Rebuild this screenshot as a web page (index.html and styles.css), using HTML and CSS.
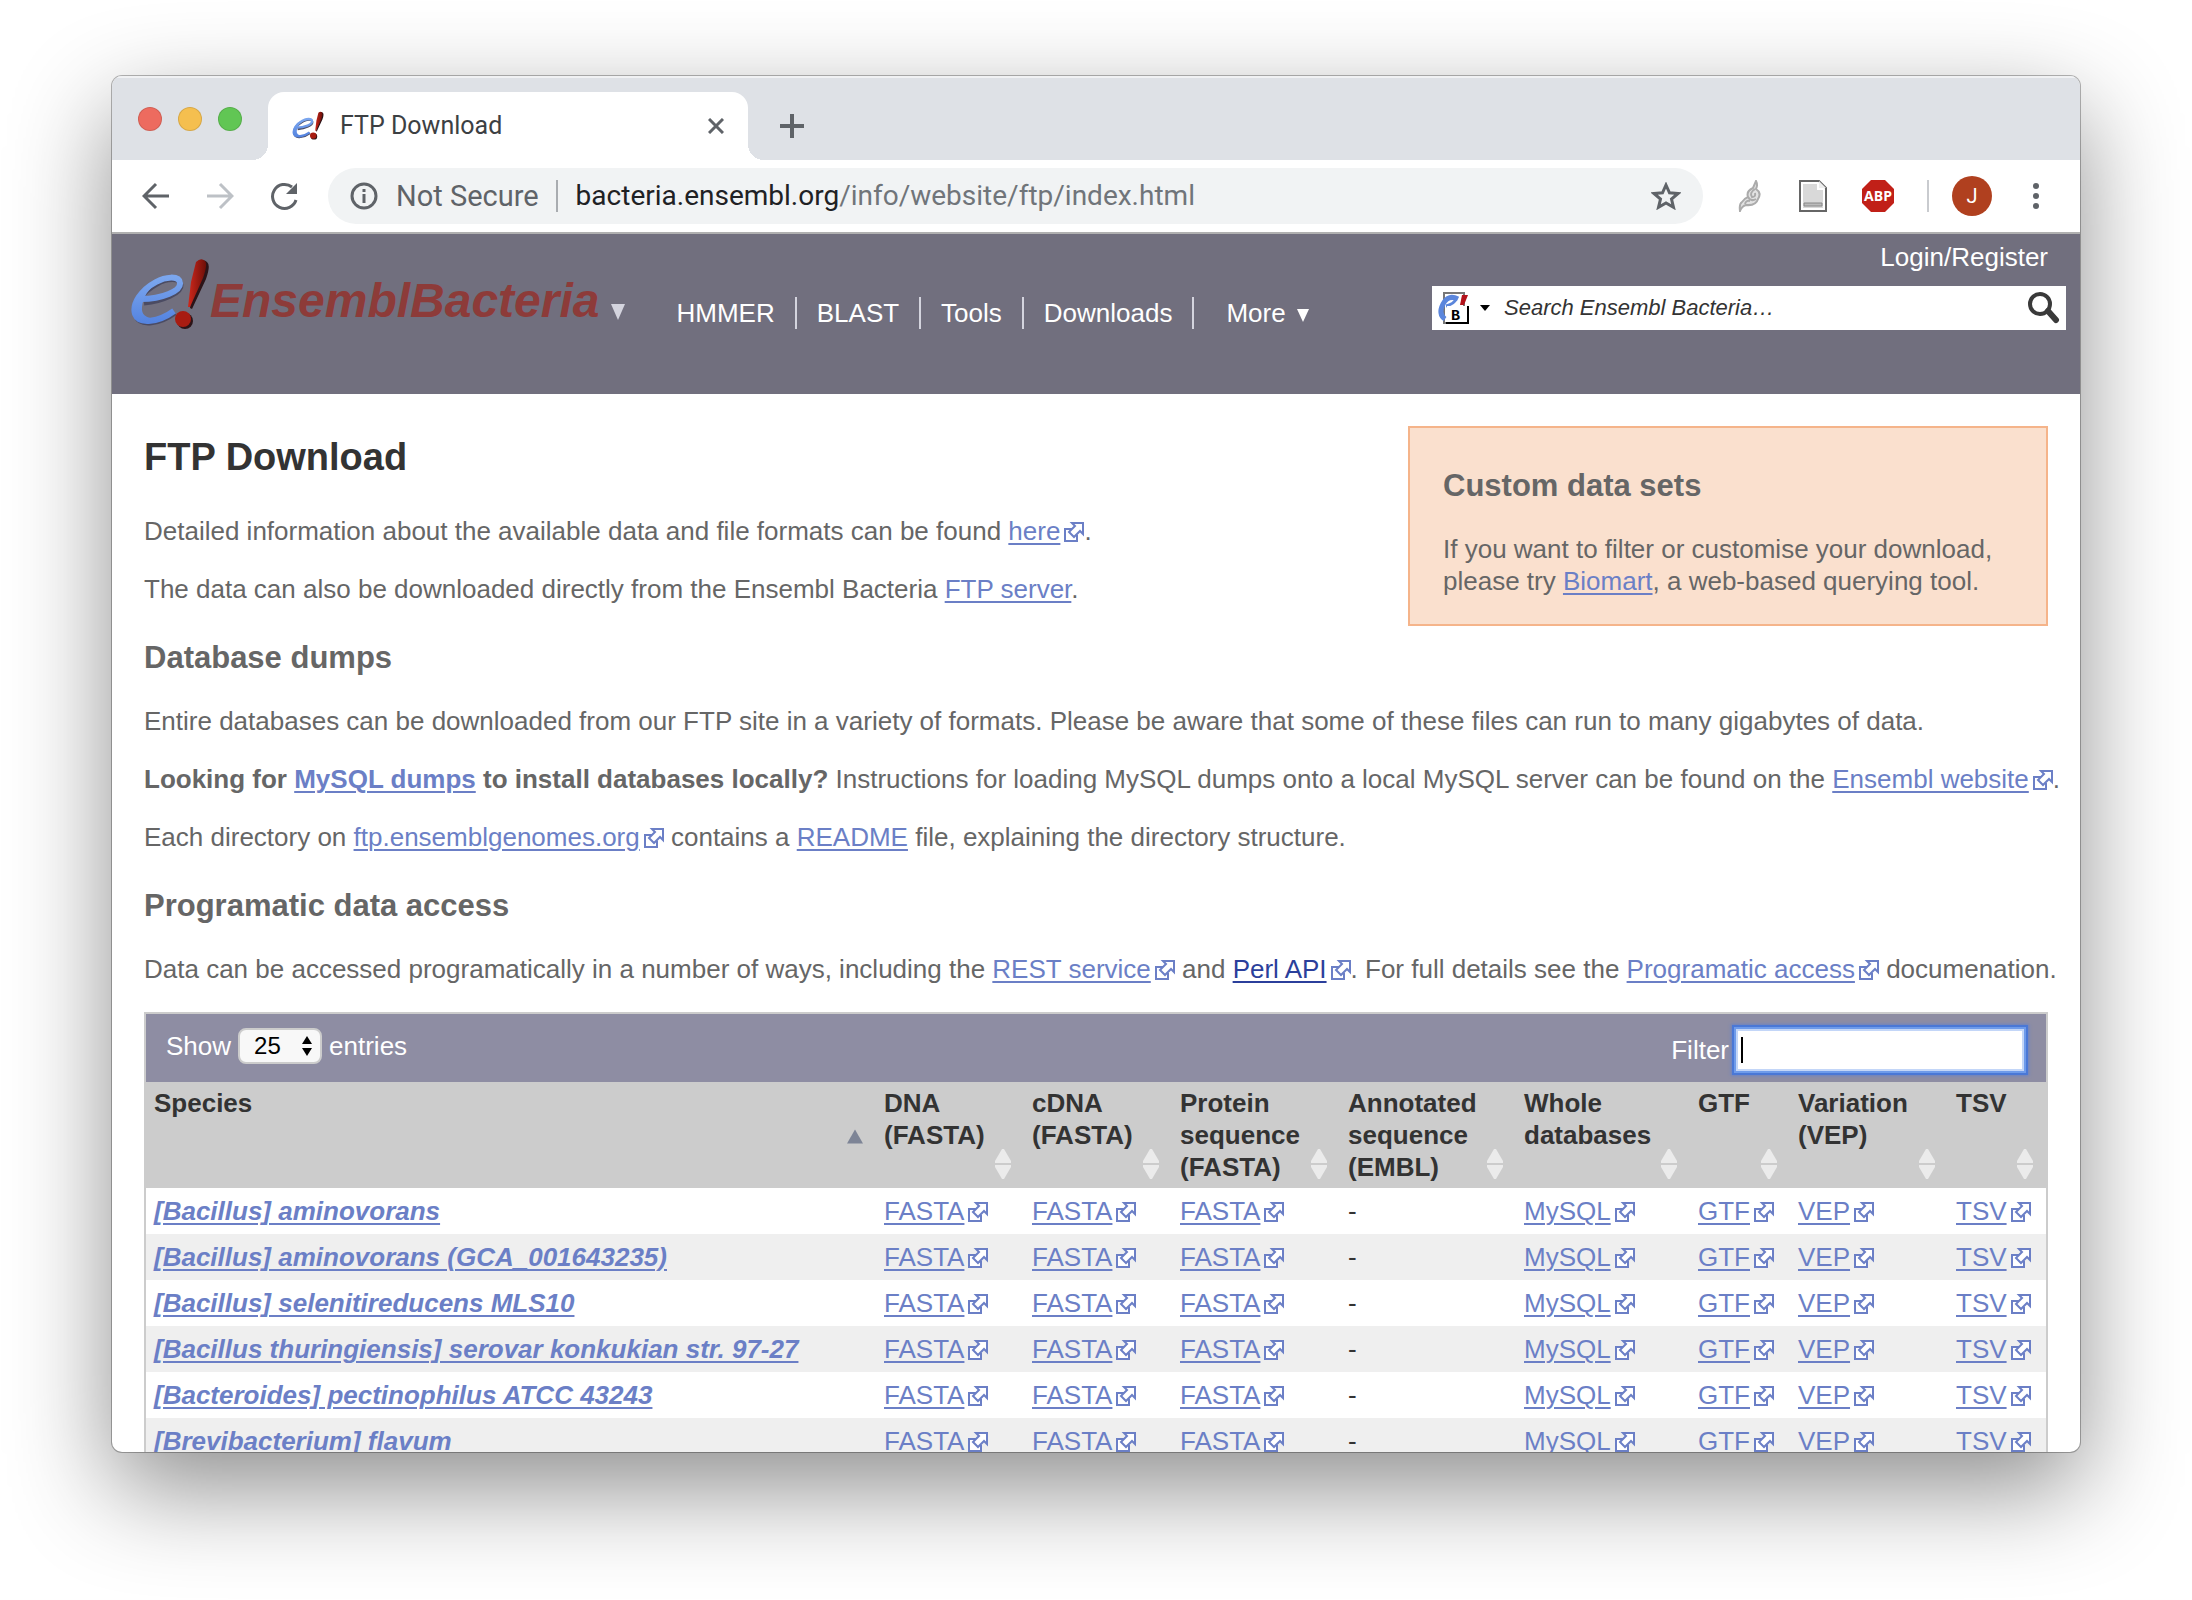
FILE: index.html
```html
<!DOCTYPE html>
<html lang="en">
<head>
<meta charset="utf-8">
<title>FTP Download</title>
<link rel="stylesheet" href="styles.css">
</head>
<body>
<svg class="defs" aria-hidden="true">
  <defs>
    <linearGradient id="blue" x1="0" y1="0" x2="0" y2="1"><stop offset="0" stop-color="#7ba6ee"/><stop offset="1" stop-color="#5584e0"/></linearGradient>
    <linearGradient id="red" x1="0" y1="0" x2="1" y2="0"><stop offset="0" stop-color="#d0281c"/><stop offset="1" stop-color="#6d0f08"/></linearGradient>
    <symbol id="mark" viewBox="0 0 80 74">
      <path d="M13 43C32 41 51 33 50 25C49 17 35 19 26 24C11 32 2 46 5 56C9 67 29 64 44 53" fill="none" stroke="#4b4b62" stroke-width="5" transform="translate(1 2)"/>
      <path d="M11 41C32 41 51 33 50 25C49 17 35 19 26 24C11 32 2 46 5 56C9 67 29 64 44 53" fill="none" stroke="url(#blue)" stroke-width="6"/>
      <path d="M26 22C9 30 0 46 3 57C6 67 22 66 32 60C18 62 11 58 12 49C13 40 18 30 28 25Z" fill="url(#blue)"/>
      <path d="M66 4Q71-1 75 3Q79 6 74 20L60 50L58 49L61 24Z" fill="#2c1418" transform="translate(2 1)"/>
      <path d="M66 4Q71-1 75 3Q78 6 73 20L60 49L58 49L61 24Z" fill="url(#red)"/>
      <circle cx="55" cy="63" r="8" fill="#2c1418"/>
      <circle cx="53" cy="61" r="8" fill="#a81c12"/>
    </symbol>
    <symbol id="ext" viewBox="0 0 20 20">
      <path d="M8 7H1V19H13V13" fill="#fff" stroke="#6b7fc6" stroke-width="2"/>
      <path d="M8 1H19V12L16 9L10 15L5 10L11 4Z" fill="#fff" stroke="#6b7fc6" stroke-width="2"/>
    </symbol>
    <symbol id="sort" viewBox="0 0 16 30">
      <path d="M7 0H9L16 12V14H0V12ZM0 16H16V18L9 30H7L0 18Z" fill="#ebebeb"/>
    </symbol>
  </defs>
</svg>

<div class="window">
  <div class="tabstrip">
    <div class="lights"><span class="light red"></span><span class="light yellow"></span><span class="light green"></span></div>
    <div class="tab">
      <svg class="favicon" aria-hidden="true"><use href="#mark"/></svg>
      <span class="tab-title">FTP Download</span>
      <button class="icon-btn" aria-label="Close tab"><svg width="16" height="16" viewBox="0 0 16 16"><path d="M1 1L15 15M15 1L1 15" stroke="#5f6368" stroke-width="3"/></svg></button>
    </div>
    <button class="icon-btn newtab" aria-label="New tab"><svg width="24" height="24" viewBox="0 0 24 24"><path d="M12 0V24M0 12H24" stroke="#5f6368" stroke-width="4"/></svg></button>
  </div>

  <div class="toolbar">
    <button class="icon-btn" aria-label="Back"><svg width="28" height="28" viewBox="0 0 28 28"><path d="M27 14H3M14 2L2 14L14 26" fill="none" stroke="#5f6368" stroke-width="3"/></svg></button>
    <button class="icon-btn" aria-label="Forward"><svg width="28" height="28" viewBox="0 0 28 28"><path d="M1 14H25M14 2L26 14L14 26" fill="none" stroke="#bdc1c6" stroke-width="3"/></svg></button>
    <button class="icon-btn" aria-label="Reload"><svg width="28" height="28" viewBox="0 0 28 28"><path d="M26 18A12 12 0 1 1 22 5" fill="none" stroke="#5f6368" stroke-width="3"/><path d="M27 1V12H16Z" fill="#5f6368"/></svg></button>
    <div class="omnibox">
      <svg width="28" height="28" viewBox="0 0 28 28" aria-hidden="true"><circle cx="14" cy="14" r="12" fill="none" stroke="#5f6368" stroke-width="3"/><path d="M14 12V21M14 7V10" stroke="#5f6368" stroke-width="3"/></svg>
      <span class="secure">Not Secure</span>
      <span class="url">bacteria.ensembl.org<span class="path">/info/website/ftp/index.html</span></span>
      <button class="icon-btn star" aria-label="Bookmark"><svg width="30" height="28" viewBox="0 0 30 28"><path d="M15 3L18.500 10.800L27 11.500L20.500 17L22.500 25.300L15 21L7.500 25.300L9.500 17L3 11.500L11.500 10.800Z" fill="none" stroke="#5f6368" stroke-width="3"/></svg></button>
    </div>
    <div class="extensions">
      <button class="icon-btn" aria-label="Feather"><svg width="28" height="32" viewBox="0 0 28 32"><path d="M4 31Q3 24 6 22Q9 18 12 17Q10 11 17 8L20 1Q22 5 20 9Q26 13 22 19Q20 26 10 25Q6 26 4 31Z" fill="#e2e2e2" stroke="#ababab" stroke-width="2"/><path d="M19 9Q13 13 16 17Q20 17 19 13M12 17Q15 22 20 19M9 24Q10 20 14 21" fill="none" stroke="#ababab" stroke-width="2"/></svg></button>
      <button class="icon-btn" aria-label="Document"><svg width="28" height="32" viewBox="0 0 28 32"><path d="M1 1H20L27 8V31H1Z" fill="#fff" stroke="#666" stroke-width="2"/><path d="M4 4H18V10H24V28H4Z" fill="#d9d9d9"/><path d="M20 1V8H27Z" fill="#eee"/><path d="M5 23H23V26H5Z" fill="#bbb" stroke="#888"/></svg></button>
      <button class="icon-btn abp" aria-label="Adblock Plus"><svg width="32" height="32" viewBox="0 0 32 32"><path d="M9 0H23L32 9V23L23 32H9L0 23V9Z" fill="#c12018"/></svg><span>ABP</span></button>
      <span class="divider"></span>
      <button class="avatar">J</button>
      <button class="icon-btn menu" aria-label="Menu"><svg width="8" height="28" viewBox="0 0 8 28"><g fill="#5f6368"><circle cx="4" cy="4" r="3"/><circle cx="4" cy="14" r="3"/><circle cx="4" cy="24" r="3"/></g></svg></button>
    </div>
  </div>

  <div class="page">
    <header class="masthead">
      <a class="logo" href="#"><svg class="logo-mark" aria-hidden="true"><use href="#mark"/></svg><span>EnsemblBacteria</span><svg class="logo-arrow" viewBox="0 0 14 16"><path d="M0 0H14L7 16Z" fill="#d4d4de"/></svg></a>
      <nav class="nav">
        <a href="#">HMMER</a><a href="#">BLAST</a><a href="#">Tools</a><a href="#">Downloads</a>
        <a class="more" href="#">More <svg width="12" height="13" viewBox="0 0 12 13"><path d="M0 0H12L6 13Z" fill="#fff"/></svg></a>
      </nav>
      <div class="tools">
        <a class="login" href="#">Login/Register</a>
        <form class="search">
          <button type="button" class="icon-btn species-pick" aria-label="Choose site">
            <svg class="site" viewBox="0 0 32 32"><path d="M6 1H26V31H6Z" fill="#fff" stroke="#777" stroke-width="2"/><path d="M20 7Q10 2 5 12Q0 22 7 27" fill="none" stroke="#5b86dc" stroke-width="5"/><path d="M8 14Q16 12 18 7" fill="none" stroke="#5b86dc" stroke-width="3"/><path d="M24 3H30L26 13H22Z" fill="#b3131b"/><path d="M9 14H29V30H9Z" fill="#fff"/><path d="M30 14V31H8" fill="none" stroke="#000" stroke-width="2"/><text x="13" y="28" class="badge">B</text></svg>
            <svg width="10" height="6" viewBox="0 0 10 6"><path d="M0 0H10L5 6Z" fill="#000"/></svg>
          </button>
          <input type="text" aria-label="Search" placeholder="Search Ensembl Bacteria…">
          <button type="button" class="icon-btn" aria-label="Go"><svg width="32" height="32" viewBox="0 0 32 32"><circle cx="12" cy="12" r="10" fill="none" stroke="#3a3a3a" stroke-width="4"/><path d="M20 19L28 28" stroke="#3a3a3a" stroke-width="6" stroke-linecap="round"/></svg></button>
        </form>
      </div>
    </header>

    <main class="content">
      <div class="top">
        <div class="intro">
          <h1>FTP Download</h1>
          <p>Detailed information about the available data and file formats can be found <a href="#">here</a><svg class="ext"><use href="#ext"/></svg>.</p>
          <p>The data can also be downloaded directly from the Ensembl Bacteria <a href="#">FTP server</a>.</p>
          <h2>Database dumps</h2>
        </div>
        <aside class="info">
          <h2>Custom data sets</h2>
          <p>If you want to filter or customise your download, please try <a href="#">Biomart</a>, a web-based querying tool.</p>
        </aside>
      </div>
      <p class="line">Entire databases can be downloaded from our FTP site in a variety of formats. Please be aware that some of these files can run to many gigabytes of data.</p>
      <p class="line"><b>Looking for <a href="#">MySQL dumps</a> to install databases locally?</b> Instructions for loading MySQL dumps onto a local MySQL server can be found on the <a href="#">Ensembl website</a><svg class="ext"><use href="#ext"/></svg>.</p>
      <p class="line">Each directory on <a href="#">ftp.ensemblgenomes.org</a><svg class="ext"><use href="#ext"/></svg> contains a <a href="#">README</a> file, explaining the directory structure.</p>
      <h2>Programatic data access</h2>
      <p class="line">Data can be accessed programatically in a number of ways, including the <a href="#">REST service</a><svg class="ext"><use href="#ext"/></svg> and <a class="visited" href="#">Perl API</a><svg class="ext"><use href="#ext"/></svg>. For full details see the <a href="#">Programatic access</a><svg class="ext"><use href="#ext"/></svg> documenation.</p>

      <div class="datatable">
        <div class="controls">
          <label class="length">Show <select><option>25</option></select> entries</label>
          <label class="filter">Filter <span class="field"><input type="text"><span class="caret"></span></span></label>
        </div>
        <table>
          <colgroup><col><col class="c148"><col class="c148"><col class="c168"><col class="c176"><col class="c174"><col class="c100"><col class="c158"><col class="c98"></colgroup>
          <thead>
            <tr>
              <th><button><span>Species</span><svg class="asc" viewBox="0 0 16 14"><path d="M8 0L16 14H0Z" fill="#7d8496"/></svg></button></th>
              <th><button><span>DNA<br>(FASTA)</span><svg class="both"><use href="#sort"/></svg></button></th>
              <th><button><span>cDNA<br>(FASTA)</span><svg class="both"><use href="#sort"/></svg></button></th>
              <th><button><span>Protein<br>sequence<br>(FASTA)</span><svg class="both"><use href="#sort"/></svg></button></th>
              <th><button><span>Annotated<br>sequence<br>(EMBL)</span><svg class="both"><use href="#sort"/></svg></button></th>
              <th><button><span>Whole<br>databases</span><svg class="both"><use href="#sort"/></svg></button></th>
              <th><button><span>GTF</span><svg class="both"><use href="#sort"/></svg></button></th>
              <th><button><span>Variation<br>(VEP)</span><svg class="both"><use href="#sort"/></svg></button></th>
              <th><button><span>TSV</span><svg class="both"><use href="#sort"/></svg></button></th>
            </tr>
          </thead>
          <tbody id="rows"></tbody>
        </table>
      </div>
    </main>
  </div>
</div>
<script src="rows.js"></script>
</body>
</html>
```
FILE: rows.js
```js
const species = [
  "[Bacillus] aminovorans",
  "[Bacillus] aminovorans (GCA_001643235)",
  "[Bacillus] selenitireducens MLS10",
  "[Bacillus thuringiensis] serovar konkukian str. 97-27",
  "[Bacteroides] pectinophilus ATCC 43243",
  "[Brevibacterium] flavum"
];
const files = ["FASTA", "FASTA", "FASTA", null, "MySQL", "GTF", "VEP", "TSV"];
const cell = f => f
  ? `<td><a href="#">${f}</a><svg class="ext"><use href="#ext"/></svg></td>`
  : "<td>-</td>";
document.getElementById("rows").innerHTML = species
  .map(s => `<tr><td class="species"><a href="#">${s}</a></td>${files.map(cell).join("")}</tr>`)
  .join("");
```
FILE: styles.css
```css
* { box-sizing: border-box; }

body {
  margin: 0;
  height: 100vh;
  padding: 76px 112px 148px;
  display: flex;
  background: #fff;
  font: 26px/32px "Liberation Sans", Arial, sans-serif;
  color: #666;
}

.defs { position: absolute; width: 0; height: 0; }

button, input, select { font: inherit; color: inherit; }
button { border: 0; padding: 0; background: none; }
.icon-btn { display: flex; align-items: center; }

.window {
  flex: 1;
  min-width: 0;
  display: flex;
  flex-direction: column;
  overflow: hidden;
  border-radius: 10px;
  background: #fff;
  box-shadow: 0 0 0 1px rgba(0, 0, 0, .28), 0 36px 100px rgba(0, 0, 0, .45);
}

/* Browser chrome */
.tabstrip {
  height: 84px;
  flex: none;
  display: flex;
  align-items: flex-end;
  background: #dee1e6;
  box-shadow: inset 0 2px #f0f1f3;
}
.lights { display: flex; gap: 16px; padding: 0 26px 29px; }
.light { width: 24px; height: 24px; border-radius: 50%; border: 1px solid rgba(0, 0, 0, .12); }
.red { background: #ed6b5f; }
.yellow { background: #f5bf4f; }
.green { background: #61c654; }

.tab {
  position: relative;
  width: 480px;
  height: 68px;
  display: flex;
  align-items: center;
  gap: 16px;
  padding: 0 24px;
  border-radius: 16px 16px 0 0;
  background: #fff;
}
.tab::before, .tab::after {
  content: "";
  position: absolute;
  bottom: 0;
  width: 16px;
  height: 16px;
}
.tab::before { left: -16px; background: radial-gradient(circle at 0 0, #dee1e6 16px, #fff 16px); }
.tab::after { right: -16px; background: radial-gradient(circle at 100% 0, #dee1e6 16px, #fff 16px); }
.favicon { width: 32px; height: 30px; }
.tab-title { flex: 1; font-size: 25px; font-family: Roboto, sans-serif; color: #3c4043; }
.newtab { margin: 0 0 22px 32px; }

.toolbar {
  height: 74px;
  flex: none;
  display: flex;
  align-items: center;
  gap: 36px;
  padding-left: 30px;
  padding-right: 40px;
  border-bottom: 2px solid #b0b0b0;
  background: #fff;
}
.omnibox {
  flex: 1;
  height: 56px;
  display: flex;
  align-items: center;
  margin-left: -6px;
  padding: 0 22px;
  border-radius: 28px;
  background: #f1f3f4;
  font: 28px/32px Roboto, sans-serif;
  color: #5f6368;
}
.secure { margin-left: 18px; padding-right: 17px; border-right: 2px solid #a9acb0; font-size: 29px; }
.url { flex: 1; margin-left: 18px; color: #202124; white-space: nowrap; }
.path { color: #70757a; }
.extensions { display: flex; align-items: center; gap: 35px; margin-left: -3px; }
.abp { position: relative; width: 32px; justify-content: center; }
.abp span { position: absolute; font: bold 14px/32px "Open Sans", sans-serif; color: #fff; }
.divider { width: 2px; height: 32px; margin-left: -2px; background: #c9cbcf; }
.avatar { width: 40px; height: 40px; margin-left: -12px; border-radius: 50%; background: #b0401f; color: #fff; font: 20px/40px Roboto, sans-serif; }
.menu { margin-left: 5px; }

/* Site header */
.page { flex: 1; min-height: 0; overflow: hidden; }
.masthead {
  height: 160px;
  display: flex;
  align-items: flex-start;
  padding: 0 14px 0 18px;
  background: #716f7e;
}
.masthead a { color: #fff; text-decoration: none; }
.masthead .logo {
  display: flex;
  align-items: flex-start;
  padding-top: 24px;
  font: italic bold 48px/72px "Liberation Sans", Arial, sans-serif;
  color: #8d3b39;
}
.logo-mark { width: 80px; height: 74px; }
.logo span { padding-top: 7px; margin-right: 11px; }
.logo-arrow { width: 14px; height: 16px; margin-top: 46px; }
.nav { display: flex; padding-top: 63px; margin-left: 32px; }
.nav a { padding: 0 20px; border-right: 2px solid #d4d4de; }
.nav .more { padding-left: 32px; border: 0; }
.more svg { margin-left: 4px; }
.tools { width: 634px; margin-left: auto; padding-top: 7px; display: flex; flex-direction: column; gap: 13px; }
.login { align-self: flex-end; margin-right: 18px; }
.search { display: flex; align-items: center; height: 44px; padding: 0 6px; background: #fff; }
.species-pick { gap: 10px; }
.site { width: 32px; height: 32px; overflow: visible; }
.badge { font: bold 15px "Liberation Mono", monospace; fill: #000; }
.search input {
  flex: 1;
  height: 44px;
  border: 0;
  padding: 0 14px;
  background: none;
  font-style: italic;
  font-size: 22px;
}
.search input::placeholder { color: #333; }

/* Page text */
.content { padding: 32px; }
a { color: #6b7fc6; text-decoration-thickness: 2px; text-underline-offset: 3px; }
a.visited { color: #2b3f9b; }
p { margin: 0 0 26px; }
.line { white-space: nowrap; }
h1 { margin: 0 0 36px; padding-top: 9px; font-size: 38px; line-height: 44px; color: #333; }
h2 { margin: 37px 0 31px; font-size: 31px; line-height: 32px; }
.top { display: flex; justify-content: space-between; }
.info {
  width: 640px;
  height: 200px;
  padding: 42px 20px 26px 33px;
  border: 2px solid #f5b48a;
  background: #fae0ce;
}
.info h2 { margin: 0 0 31px; }
.info p { margin: 0; }
.ext { width: 20px; height: 20px; margin-left: 4px; vertical-align: -2px; }

/* Data table */
.datatable { margin-top: 27px; border: 2px solid #ccc; }
.controls {
  height: 68px;
  display: flex;
  align-items: center;
  justify-content: space-between;
  padding: 0 22px 0 20px;
  background: #8e8da3;
  color: #fff;
}
.length, .filter { display: flex; align-items: center; gap: 7px; }
.length { padding-bottom: 4px; }
.filter { padding-top: 3px; }
.length select {
  width: 84px;
  height: 36px;
  appearance: none;
  border: 2px solid #ccc;
  border-radius: 8px;
  padding: 0 14px;
  background: #f8f8f8 url("data:image/svg+xml,%3Csvg xmlns='http://www.w3.org/2000/svg' width='10' height='20'%3E%3Cpath d='M5 0L10 8H0ZM0 12H10L5 20Z'/%3E%3C/svg%3E") no-repeat right 8px center;
  font-size: 24px;
  color: #000;
}
.field { position: relative; display: flex; }
.filter input {
  width: 288px;
  height: 42px;
  border: 2px solid #c3d6f8;
  padding: 0 4px;
  background: #fff;
  color: #000;
  box-shadow: 0 0 0 2px #6e9bea, 0 0 0 4px #4a78d6, 0 0 3px 5px #6a83c4;
}
.caret { position: absolute; left: 5px; top: 8px; width: 2px; height: 26px; background: #000; }

table { width: 100%; table-layout: fixed; border-collapse: collapse; color: #333; }
.c98 { width: 98px; }
.c100 { width: 100px; }
.c148 { width: 148px; }
.c158 { width: 158px; }
.c168 { width: 168px; }
.c174 { width: 174px; }
.c176 { width: 176px; }
th { padding: 5px 13px 5px 8px; background: #ccc; text-align: left; }
th button {
  position: relative;
  display: flex;
  align-items: flex-start;
  width: 100%;
  height: 96px;
  text-align: left;
}
th svg { position: absolute; right: 0; width: 16px; }
.both { bottom: 4px; height: 30px; }
.asc { bottom: 39px; height: 15px; }
td { padding: 7px 8px; white-space: nowrap; }
.species { font-weight: bold; font-style: italic; }
tbody tr:nth-child(even) { background: #efefef; }
```
